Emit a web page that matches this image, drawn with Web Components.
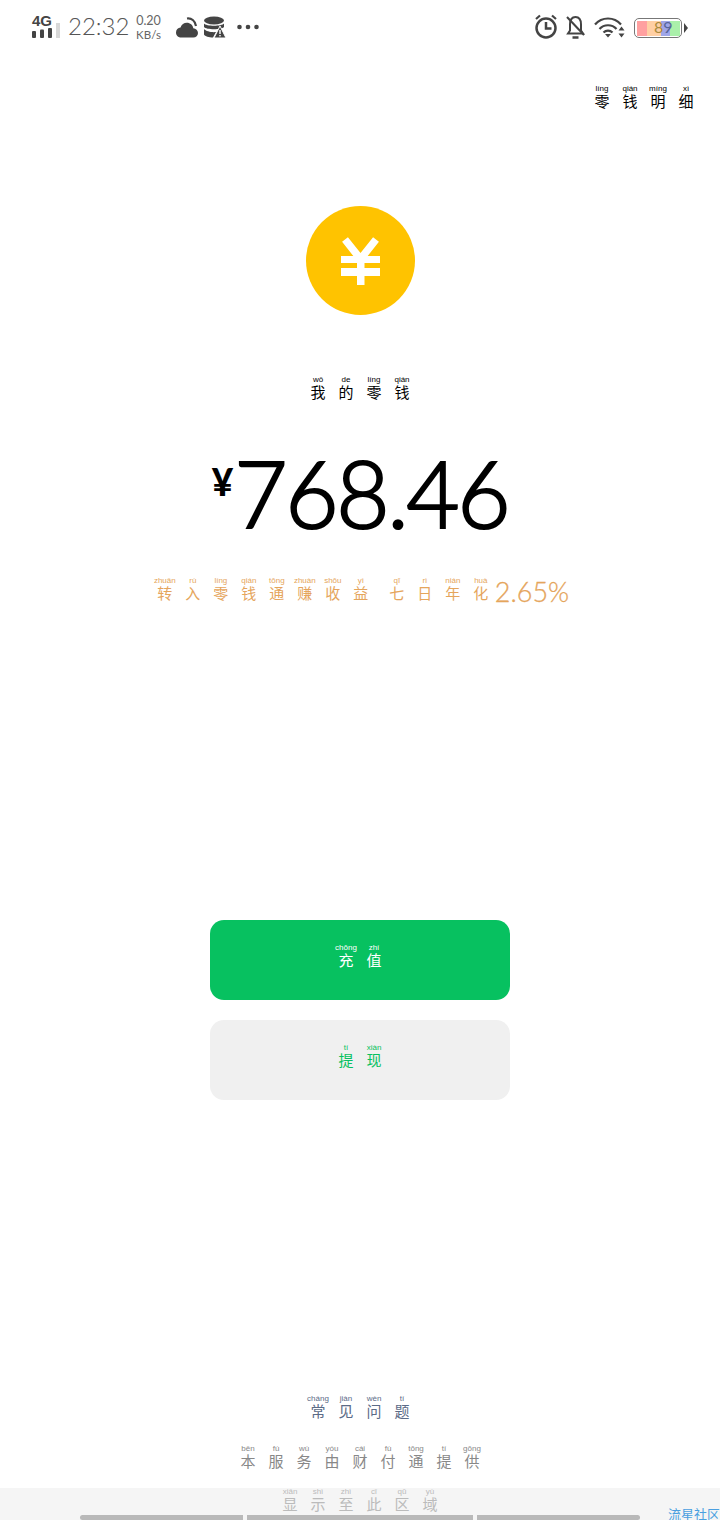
<!DOCTYPE html>
<html lang="zh"><head><meta charset="utf-8"><title>我的零钱</title>
<style>
html,body{margin:0;padding:0;background:#fff}
body{width:720px;height:1520px;overflow:hidden;font-family:"Liberation Sans","Noto Sans CJK SC",sans-serif}
</style></head><body>
<wallet-page></wallet-page>
<script>
class PyText extends HTMLElement{
  connectedCallback(){
    const han=[...this.getAttribute('text')],py=this.getAttribute('py').split(' ');
    const s=this.attachShadow({mode:'open'});
    s.innerHTML=`<style>
      :host{display:inline-flex;flex:none;color:var(--py-color,#000);font-family:"Liberation Sans","Noto Sans CJK SC",sans-serif}
      .c{width:28px;display:flex;flex-direction:column;align-items:center}
      .p{font:var(--py-weight,400) 8px/8px "Liberation Sans",sans-serif;white-space:nowrap;height:8px}
      .h{font:400 15px/15px "Noto Sans CJK SC",sans-serif;height:15px}
    </style>`+han.map((h,i)=>`<span class="c"><span class="p">${py[i]}</span><span class="h">${h}</span></span>`).join('');
  }
}
customElements.define('py-text',PyText);

class StatusBar extends HTMLElement{
  constructor(){super();this.attachShadow({mode:'open'}).innerHTML=`<style>
    :host{display:flex;flex:none;height:52px;box-sizing:border-box;padding:13px 32px 0 32px;justify-content:space-between;align-items:flex-start;color:#555;font-family:Lato,sans-serif}
    .l,.r{display:flex;align-items:flex-start}
    svg{display:block;flex:none}
    .time{font:300 24px/26px Lato,sans-serif;margin-left:8px;color:#555;width:60px;white-space:nowrap}
    .sp{font:400 12.500px/14px Lato,sans-serif;margin-left:8px;width:25px;text-align:center;color:#666;padding-top:1px}
    .sp small{font-size:11.500px}
    .bat{width:48px;height:20px;box-sizing:border-box;border:1.500px solid #777;border-radius:5px;margin:5px 0 0 9px;position:relative;overflow:hidden;display:flex;padding:1.500px}
    .bat i{display:block;height:100%}
    .bat b{position:absolute;left:19px;top:-1px;font:400 16px/17px Lato,sans-serif;white-space:nowrap}
    .tip{width:4px;height:10px;background:#444;clip-path:polygon(0 0,100% 50%,0 100%);margin:10px 0 0 2px}
    .net{font:700 15px/14px "Liberation Sans",sans-serif;color:#444;position:absolute;left:0;top:1px}
    .sig{position:relative;width:28px;height:26px}
  </style>
  <div class="l">
    <div class="sig"><span class="net">4G</span>
      <svg width="28" height="26" viewBox="0 0 28 26" fill="#444"><rect y="18" width="4" height="7" rx="1"/><rect x="8" y="16.500" width="4" height="8.500" rx="1"/><rect x="16" y="15" width="4" height="10" rx="1"/><rect x="24" y="10" width="4" height="15" fill="#d8d8d8"/></svg>
    </div>
    <span class="time">22:32</span>
    <span class="sp">0.20<br><small>KB/s</small></span>
    <svg style="margin:4px 0 0 15px" width="22" height="22" viewBox="0 0 22 22" fill="#444"><path d="M5 20.500C2 20.500 0 18.200 0 15.500 0 12.700 2 10.800 4.500 10.500 5.400 7.500 8 5.800 10.800 5.800c3.400 0 6 2.300 6.500 5.400 2.600.2 4.700 2.100 4.700 4.800 0 2.700-2 4.500-4.700 4.500Z"/><path d="M11 1.500c4.500-.6 8 2.200 9 7.500" fill="none" stroke="#444" stroke-width="2.200"/></svg>
    <svg style="margin:3px 0 0 6px" width="22" height="23" viewBox="0 0 22 23" fill="#444"><ellipse cx="10" cy="4.500" rx="10" ry="4"/><path d="M0 7.500c2 3 18 3 20 0V11c-2 3-18 3-20 0Z"/><path d="M0 13c2 2.500 8 3.500 12 3l-3 5.500c-4 0-8-1-9-3Z"/><path d="M16 10l6 12H10Z" stroke="#fff" stroke-width="1"/><rect x="15.300" y="14" width="1.400" height="4" fill="#fff"/><rect x="15.300" y="19" width="1.400" height="1.400" fill="#fff"/></svg>
    <svg style="margin:11px 0 0 11px" width="22" height="6" viewBox="0 0 22 6" fill="#444"><circle cx="2.500" cy="3" r="2.300"/><circle cx="11" cy="3" r="2.300"/><circle cx="19.500" cy="3" r="2.300"/></svg>
  </div>
  <div class="r">
    <svg width="24" height="26" viewBox="0 0 24 26" fill="none" stroke="#444" stroke-width="2.500"><circle cx="12" cy="15" r="9.500"/><path d="M12 9v6.500h5.500"/><path d="M2 6l4-3.500M22 6l-4-3.500" stroke-width="2.200"/></svg>
    <svg style="margin:2px 0 0 7px" width="21" height="25" viewBox="0 0 21 25" fill="none" stroke="#444" stroke-width="2"><path d="M3 18.500h15l-2-3V9.500C16 5 14 2 10.500 2 7 2 5 5 5 9.500v6Z"/><path d="M2 2l17 18"/><path d="M7.500 22.500h6" stroke-width="2.500"/></svg>
    <svg style="margin:4px 0 0 8px" width="31" height="22" viewBox="0 0 31 22" fill="none" stroke="#444" stroke-width="2.200"><path d="M1 7.500C8-.5 20-.5 27 7.500"/><path d="M5.500 12C10 7 18 7 22.500 12"/><path d="M9.500 15.500c2.500-2.500 6.500-2.500 9 0" /><path d="M11 17l3 3.500 3-3.500Z" fill="#444" stroke="none"/><path d="M27.500 9.500l3 4h-6ZM27.500 20.500l3-4h-6Z" fill="#444" stroke="none"/></svg>
    <div class="bat"><i style="width:11px;background:#ffa0a0"></i><i style="width:15px;background:#ffcfa4"></i><i style="width:9px;background:#9fa6e8"></i><i style="width:10px;background:#aaf0aa"></i><b><span style="color:#a88a3c">8</span><span style="color:#56649a">9</span></b></div>
    <div class="tip"></div>
  </div>`;}
}
customElements.define('status-bar',StatusBar);

class CoinIcon extends HTMLElement{
  constructor(){super();this.attachShadow({mode:'open'}).innerHTML=`<style>:host{display:block;flex:none;width:109px;height:109px}svg{display:block}</style>
  <svg width="109" height="109" viewBox="0 0 109 109"><circle cx="54.500" cy="54.500" r="54.500" fill="#ffc300"/>
  <path d="M39 33.500 54.500 53 70 33.500" fill="none" stroke="#fff" stroke-width="7.500"/>
  <path d="M51 49h7.500v30H51Z" fill="#fff"/><path d="M35 50h39v7H35ZM35 62h39v8H35Z" fill="#fff"/></svg>`;}
}
customElements.define('coin-icon',CoinIcon);

class BalanceAmount extends HTMLElement{
  constructor(){super();this.attachShadow({mode:'open'}).innerHTML=`<style>
    :host{display:flex;flex:none;justify-content:center;align-items:flex-start;height:90px;color:#000;font-family:Lato,sans-serif}
    .y{font:900 37px/40px Lato,sans-serif;margin-top:14px}
    .n{font:300 92px/90px Lato,sans-serif;-webkit-text-stroke:2.200px #000;letter-spacing:-2.400px;margin-left:1px;white-space:nowrap}
  </style><span class="y">¥</span><span class="n"><slot></slot></span>`;}
}
customElements.define('balance-amount',BalanceAmount);

class ActionButton extends HTMLElement{
  constructor(){super();this.attachShadow({mode:'open'}).innerHTML=`<style>
    :host{display:flex;flex:none;width:300px;height:80px;border-radius:14px;align-items:center;justify-content:center;box-sizing:border-box;padding-bottom:9px;background:var(--bg);--py-color:var(--fg)}
  </style><slot></slot>`;}
}
customElements.define('action-button',ActionButton);

class NavStrip extends HTMLElement{
  constructor(){super();this.attachShadow({mode:'open'}).innerHTML=`<style>
    :host{display:flex;flex:none;justify-content:center;align-items:flex-start;height:32px;background:#f5f5f5;position:relative;--py-color:#bbb}
    .bars{position:absolute;left:80px;bottom:0;display:flex;gap:4px;height:5px}
    .bars i{display:block;background:#b9b9b9;height:5px}
    .mark{position:absolute;right:0;bottom:0;font:400 13px/13px "Noto Sans CJK SC",sans-serif;color:#4a9fe0;white-space:nowrap}
  </style><slot></slot>
  <div class="bars"><i style="width:163px;border-radius:3px 0 0 3px"></i><i style="width:226px"></i><i style="width:163px;border-radius:0 3px 3px 0"></i></div>
  <span class="mark">流星社区</span>`;}
}
customElements.define('nav-strip',NavStrip);

class WalletPage extends HTMLElement{
  constructor(){super();this.attachShadow({mode:'open'}).innerHTML=`<style>
    :host{display:flex;flex-direction:column;width:720px;height:1520px;align-items:center;overflow:hidden}
    status-bar{align-self:stretch}
    .detail{align-self:flex-end;margin:33px 20px 0 0}
    coin-icon{margin-top:98px}
    .title{margin-top:61px}
    balance-amount{margin-top:49px}
    .rate{margin-top:39px;flex:none;display:flex;align-items:flex-start;--py-color:#e5a55c;color:#e5a55c}
    .rate .gap{margin-left:8px}
    .rate .pct{font:300 27px/30px Lato,sans-serif;-webkit-text-stroke:.3px #e5a55c;margin:0;white-space:nowrap}
    .btn1{margin-top:313px;--bg:#07c160;--fg:#fff}
    .btn2{margin-top:20px;--bg:#f0f0f0;--fg:#07c160}
    .faq{margin-top:295px;--py-color:#5b6b87}
    .by{margin-top:27px;--py-color:#888}
    nav-strip{align-self:stretch;margin-top:20px}
  </style>
  <status-bar></status-bar>
  <py-text class="detail" text="零钱明细" py="líng qián míng xì"></py-text>
  <coin-icon></coin-icon>
  <py-text class="title" text="我的零钱" py="wǒ de líng qián"></py-text>
  <balance-amount>768.46</balance-amount>
  <div class="rate"><py-text text="转入零钱通赚收益" py="zhuǎn rù líng qián tōng zhuàn shōu yì"></py-text><py-text class="gap" text="七日年化" py="qī rì nián huà"></py-text><span class="pct">2.65%</span></div>
  <action-button class="btn1"><py-text text="充值" py="chōng zhí"></py-text></action-button>
  <action-button class="btn2"><py-text text="提现" py="tí xiàn"></py-text></action-button>
  <py-text class="faq" text="常见问题" py="cháng jiàn wèn tí"></py-text>
  <py-text class="by" text="本服务由财付通提供" py="běn fú wù yóu cái fù tōng tí gōng"></py-text>
  <nav-strip><py-text text="显示至此区域" py="xiǎn shì zhì cǐ qū yù"></py-text></nav-strip>`;}
}
customElements.define('wallet-page',WalletPage);
</script>
</body></html>
